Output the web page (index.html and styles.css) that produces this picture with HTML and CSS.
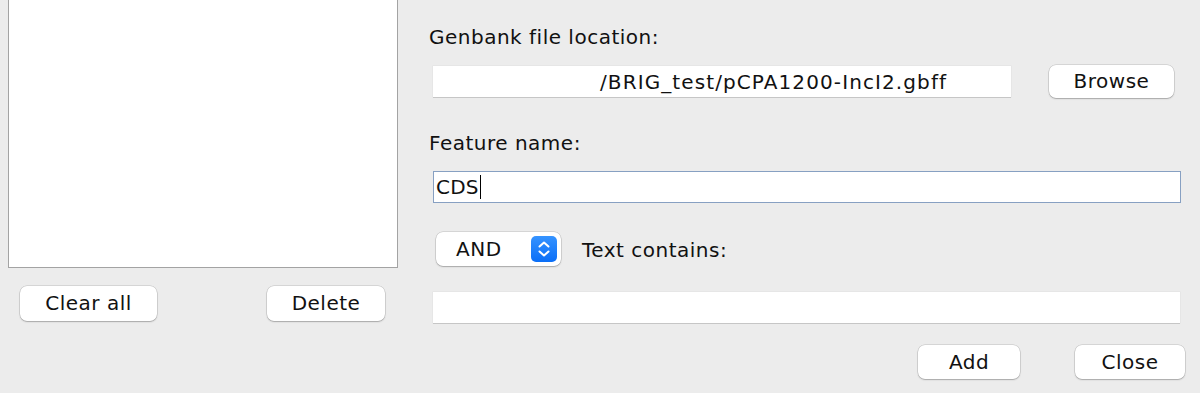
FILE: index.html
```html
<!DOCTYPE html>
<html>
<head>
<meta charset="utf-8">
<link rel="stylesheet" href="styles.css">
</head>
<body>
<div class="dialog">
  <div class="left">
    <div class="list"></div>
    <div class="left-buttons">
      <div class="btn btn-clear">Clear all</div>
      <div class="btn btn-delete">Delete</div>
    </div>
  </div>
  <div class="right">
    <div class="label label-gb">Genbank file location:</div>
    <div class="row row-file">
      <div class="field field-file"><span class="path">/BRIG_test/pCPA1200-IncI2.gbff</span></div>
      <div class="btn btn-browse">Browse</div>
    </div>
    <div class="label label-feat">Feature name:</div>
    <div class="field field-feat focused"><span>CDS</span><span class="caret"></span></div>
    <div class="row row-cond">
      <div class="combo">
        <span class="combo-text">AND</span>
        <span class="stepper">
          <svg width="26" height="26" viewBox="0 0 26 26">
            <path d="M8.5 10.5 L13 6.5 L17.5 10.5" fill="none" stroke="#fff" stroke-width="2" stroke-linecap="round" stroke-linejoin="round"/>
            <path d="M8.5 15.5 L13 19.5 L17.5 15.5" fill="none" stroke="#fff" stroke-width="2" stroke-linecap="round" stroke-linejoin="round"/>
          </svg>
        </span>
      </div>
      <div class="label label-text">Text contains:</div>
    </div>
    <div class="field field-text"></div>
    <div class="row row-actions">
      <div class="btn btn-add">Add</div>
      <div class="btn btn-close">Close</div>
    </div>
  </div>
</div>
</body>
</html>
```
FILE: styles.css
```css
html, body {
  margin: 0;
  padding: 0;
  background: #ececec;
}
body {
  width: 1200px;
  height: 393px;
  overflow: hidden;
  font-family: "DejaVu Sans", "Verdana", sans-serif;
  font-size: 20px;
  letter-spacing: 0.5px;
  color: #111;
}
.dialog {
  display: flex;
  height: 393px;
}
.left {
  width: 398px;
  padding-left: 8px;
  display: flex;
  flex-direction: column;
}
.list {
  width: 388px;
  height: 267px;
  background: #fff;
  border: 1px solid #a3a3a3;
  border-top: none;
}
.left-buttons {
  display: flex;
  margin-top: 18px;
  padding-left: 12px;
}
.btn {
  box-sizing: border-box;
  background: #fff;
  border-radius: 7px;
  box-shadow: 0 0 0 0.5px rgba(0,0,0,0.18), 0 1px 1.5px rgba(0,0,0,0.22);
  display: flex;
  align-items: center;
  justify-content: center;
  height: 35px;
  line-height: 24px;
  padding-bottom: 1px;
}
.btn-clear { width: 137px; }
.btn-delete { width: 118px; margin-left: 110px; }
.right {
  margin-left: 23px;
  display: flex;
  flex-direction: column;
  flex: 1;
}
.label {
  line-height: 24px;
  white-space: nowrap;
}
.label-gb { margin-top: 25px; }
.row { display: flex; align-items: center; }
.row-file { margin-top: 16px; padding-left: 4px; }
.field {
  box-sizing: border-box;
  background: #fff;
  height: 31px;
  box-shadow: 0 1px 0 #c6c6c6, 0 0 0 0.5px #e0e0e0;
  line-height: 24px;
  display: flex;
  align-items: center;
  white-space: nowrap;
}
.field-file { width: 578px; padding-left: 167px; }
.path { letter-spacing: 1.1px; }
.btn-browse { width: 125px; height: 33px; margin-left: 38px; }
.label-feat { margin-top: 33px; }
.field-feat {
  margin-top: 16px;
  margin-left: 4px;
  width: 748px;
  height: 32px;
  border: 1px solid #87a0c2;
  box-shadow: none;
  padding-left: 2px;
  letter-spacing: 0.2px;
}
.caret {
  display: inline-block;
  width: 1.5px;
  height: 24px;
  background: #000;
  margin-left: 1px;
}
.row-cond { margin-top: 29px; padding-left: 7px; }
.combo {
  box-sizing: border-box;
  width: 125px;
  height: 34px;
  background: #fff;
  border-radius: 7px;
  box-shadow: 0 0 0 0.5px rgba(0,0,0,0.18), 0 1px 1.5px rgba(0,0,0,0.22);
  display: flex;
  align-items: center;
  padding-left: 20px;
  padding-right: 4px;
}
.combo-text { flex: 1; line-height: 24px; }
.stepper {
  width: 26px;
  height: 26px;
  border-radius: 5px;
  background: linear-gradient(#3593ff, #0a6ef7);
  display: flex;
}
.label-text { margin-left: 21px; margin-top: 2px; }
.field-text {
  margin-top: 26px;
  margin-left: 4px;
  width: 747px;
}
.row-actions { margin-top: 22px; padding-left: 489px; }
.btn-add { width: 102px; height: 34px; }
.btn-close { width: 110px; height: 34px; margin-left: 55px; }
```
